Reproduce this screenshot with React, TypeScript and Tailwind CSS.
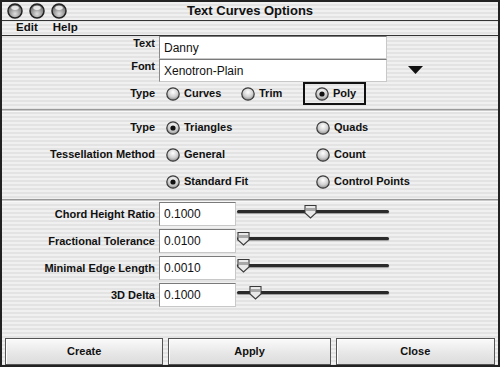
import React from "react";

const stripes =
  "bg-[repeating-linear-gradient(to_bottom,#f0f0f0_0px,#f0f0f0_2px,#e3e3e3_2px,#e3e3e3_4px)]";

function Radio({ on }: { on?: boolean }) {
  return (
    <svg width="14" height="14" viewBox="0 0 14 14" className="shrink-0">
      <defs>
        <radialGradient id="rg" cx="50%" cy="35%" r="65%">
          <stop offset="0%" stopColor="#ffffff" />
          <stop offset="60%" stopColor="#d0d0d0" />
          <stop offset="100%" stopColor="#8a8a8a" />
        </radialGradient>
      </defs>
      <circle cx="7" cy="7" r="6.2" fill="url(#rg)" stroke="#3a3a3a" strokeWidth="1.2" />
      {on && <circle cx="7" cy="7" r="2.6" fill="#111" />}
    </svg>
  );
}

function RadioOpt({ on, label }: { on?: boolean; label: string }) {
  return (
    <div className="flex items-center gap-[4px]">
      <Radio on={on} />
      <span>{label}</span>
    </div>
  );
}

function Light() {
  return (
    <svg width="16" height="16" viewBox="0 0 16 16">
      <defs>
        <radialGradient id="lg" cx="50%" cy="70%" r="60%">
          <stop offset="0%" stopColor="#e0e0e0" />
          <stop offset="100%" stopColor="#6e6e6e" />
        </radialGradient>
      </defs>
      <circle cx="8" cy="8" r="7" fill="url(#lg)" stroke="#222" strokeWidth="1.5" />
      <ellipse cx="8" cy="4.8" rx="3.8" ry="2.1" fill="#f4f4f4" opacity="0.85" />
    </svg>
  );
}

function Slider({ pos }: { pos: number }) {
  return (
    <div className="relative ml-[1px] h-[14px] w-[152px]">
      <div className="absolute left-0 right-0 top-[5px] h-[3px] rounded-full bg-[#2a2a2a] shadow-[0_1px_1px_#9a9a9a]" />
      <svg
        width="13"
        height="15"
        viewBox="0 0 13 15"
        className="absolute top-[-1px]"
        style={{ left: pos }}
      >
        <path d="M1 1.5 H12 V9 L6.5 14 L1 9 Z" fill="#e9e9e9" stroke="#3a3a3a" strokeWidth="1.1" />
        <rect x="2" y="4" width="9" height="3" fill="#a8a8a8" />
      </svg>
    </div>
  );
}

function Field({ value, w }: { value: string; w: string }) {
  return (
    <div
      className={`${w} h-full bg-white border border-t-[#7a7a7a] border-l-[#8a8a8a] border-r-[#c8c8c8] border-b-[#c8c8c8] flex items-center pl-[4px] text-[12px] font-normal`}
    >
      {value}
    </div>
  );
}

function Sep() {
  return <div className="h-[3px] border-t border-[#9a9a9a] bg-[#c8c8c8] border-b border-b-[#f8f8f8]" />;
}

function Button({ label, w }: { label: string; w: string }) {
  return (
    <div
      className={`${w} h-full flex items-center justify-center border border-[#555] bg-[linear-gradient(to_bottom,#fafafa,#e6e6e6_60%,#dcdcdc)] shadow-[inset_1px_1px_0_#fff]`}
    >
      {label}
    </div>
  );
}

export default function App() {
  return (
    <div
      className={`w-[500px] h-[367px] flex flex-col border-2 border-[#222] ${stripes} text-[#111] font-bold text-[11px] overflow-hidden`}
      style={{ fontFamily: '"Liberation Sans", Arial, sans-serif' }}
    >
      {/* Title bar */}
      <div className="relative h-[19px] flex items-center border-b border-[#333] shrink-0">
        <div className="flex items-center gap-[6px] pl-[5px]">
          <Light />
          <Light />
          <Light />
        </div>
        <div className="absolute inset-0 flex items-center justify-center text-[13px] font-bold">
          Text Curves Options
        </div>
      </div>
      {/* Menu bar */}
      <div className="h-[15px] flex items-center gap-[15px] pl-[14px] border-b border-[#333] shrink-0 text-[11.5px]">
        <span>Edit</span>
        <span>Help</span>
      </div>

      {/* Section 1 */}
      <div className="flex flex-col">
        <div className="flex h-[23px] items-stretch">
          <div className="w-[157px] text-right pr-[4px] leading-[14px]">Text</div>
          <Field value="Danny" w="w-[228px]" />
        </div>
        <div className="flex h-[23px] items-stretch">
          <div className="w-[157px] text-right pr-[4px] leading-[14px]">Font</div>
          <Field value="Xenotron-Plain" w="w-[228px]" />
          <div className="ml-[21px] mt-[7px]">
            <svg width="15" height="8" viewBox="0 0 15 8">
              <path d="M0 0 H15 L7.5 8 Z" fill="#111" />
            </svg>
          </div>
        </div>
        <div className="flex h-[23px] items-center">
          <div className="w-[157px] text-right pr-[4px]">Type</div>
          <div className="w-[74px] flex pl-[7px]">
            <RadioOpt label="Curves" />
          </div>
          <div className="w-[64px] flex pl-[8px]">
            <RadioOpt label="Trim" />
          </div>
          <div className="ml-[6px] h-[23px] w-[63px] border-2 border-[#111] flex items-center pl-[10px]">
            <RadioOpt on label="Poly" />
          </div>
        </div>
      </div>
      <div className="h-[4px]" />
      <Sep />

      {/* Section 2 */}
      <div className="flex flex-col pt-[2px]">
        {[
          ["Type", "Triangles", true, "Quads", false],
          ["Tessellation Method", "General", false, "Count", false],
          ["", "Standard Fit", true, "Control Points", false],
        ].map(([label, a, aOn, b, bOn], i) => (
          <div key={i} className="flex h-[27px] items-center">
            <div className="w-[157px] text-right pr-[4px]">{label as string}</div>
            <div className="w-[157px] pl-[7px] flex">
              <RadioOpt on={aOn as boolean} label={a as string} />
            </div>
            <div className="flex">
              <RadioOpt on={bOn as boolean} label={b as string} />
            </div>
          </div>
        ))}
      </div>
      <div className="h-[4px]" />
      <Sep />

      {/* Section 3 */}
      <div className="flex flex-col gap-[3px]">
        {[
          ["Chord Height Ratio", "0.1000", 67],
          ["Fractional Tolerance", "0.0100", 0],
          ["Minimal Edge Length", "0.0010", 0],
          ["3D Delta", "0.1000", 12],
        ].map(([label, v, pos], i) => (
          <div key={i} className="flex h-[24px] items-stretch">
            <div className="w-[157px] text-right pr-[4px] flex items-center">
              <span className="w-full">{label as string}</span>
            </div>
            <Field value={v as string} w="w-[77px]" />
            <div className="flex items-start pt-[3px]">
              <Slider pos={pos as number} />
            </div>
          </div>
        ))}
      </div>

      <div className="flex-1" />
      {/* Buttons */}
      <div className="h-[27px] flex gap-[5px] px-[3px] shrink-0">
        <Button label="Create" w="w-[159px]" />
        <Button label="Apply" w="w-[163px]" />
        <Button label="Close" w="w-[160px]" />
      </div>
    </div>
  );
}
